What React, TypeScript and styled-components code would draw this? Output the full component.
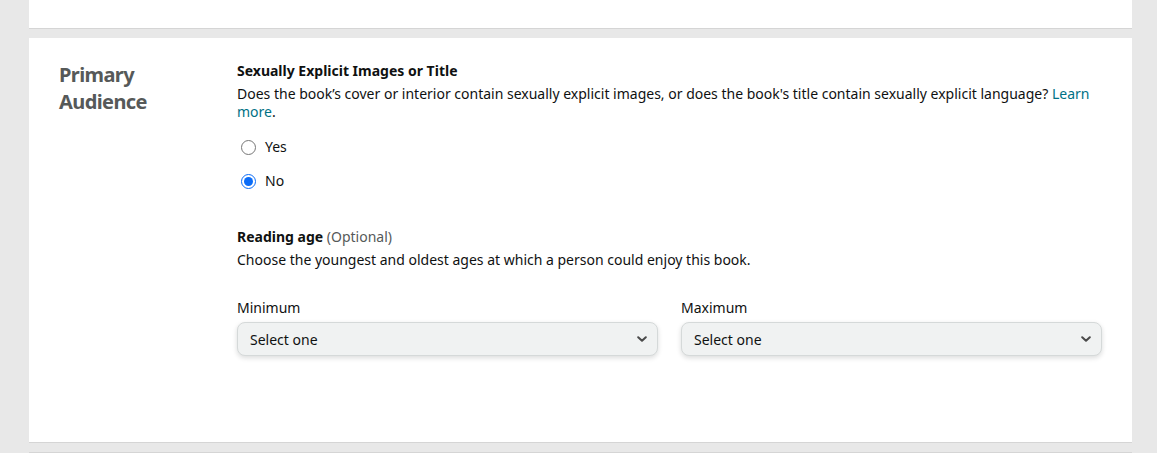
import React from "react";
import styled, { createGlobalStyle } from "styled-components";

const Global = createGlobalStyle`
  html, body { margin: 0; padding: 0; }
  body {
    background: #e8e8e8;
    font-family: "Noto Sans", "Liberation Sans", Arial, sans-serif;
    color: #0f1111;
  }
`;

const Page = styled.div`
  display: flex;
  flex-direction: column;
  gap: 9px;
  padding: 0 25px 0 29px;
  width: 1103px;
`;

const Card = styled.section<{ $stub?: boolean }>`
  background: #fff;
  border-bottom: 1px solid #d5d5d5;
  height: ${(p) => (p.$stub ? "28px" : "auto")};
  box-sizing: content-box;
`;

const Row = styled.div`
  display: grid;
  grid-template-columns: 178px 1fr;
  padding: 23px 30px 86px 30px;
`;

const SectionTitle = styled.h2`
  margin: 0;
  font-size: 20px;
  line-height: 27px;
  font-weight: 700;
  letter-spacing: -0.6px;
  color: #565959;
`;

const Content = styled.div`
  display: flex;
  flex-direction: column;
`;

const Label = styled.div`
  font-size: 14px;
  line-height: 20px;
  font-weight: 700;
`;

const Optional = styled.span`
  font-weight: 400;
  color: #565959;
`;

const Desc = styled.p`
  margin: 4px 0 0;
  font-size: 14px;
  line-height: 18px;
`;

const Link = styled.a`
  color: #007185;
  text-decoration: none;
`;

const RadioGroup = styled.div`
  display: flex;
  flex-direction: column;
  gap: 14px;
  margin: 16px 0 0;
`;

const RadioLabel = styled.label`
  display: flex;
  align-items: center;
  gap: 9px;
  font-size: 14px;
  line-height: 20px;
  padding-left: 4px;
`;

const Radio = styled.input`
  margin: 0;
  width: 15px;
  height: 15px;
  accent-color: #0b6cf7;
`;

const Block = styled.div<{ $mt: number }>`
  margin-top: ${(p) => p.$mt}px;
`;

const Selects = styled.div`
  display: grid;
  grid-template-columns: 1fr 1fr;
  gap: 23px;
  margin-top: 29px;
`;

const Field = styled.div`
  display: flex;
  flex-direction: column;
  gap: 4px;
`;

const FieldLabel = styled.div`
  font-size: 14px;
  line-height: 20px;
`;

const SelectBox = styled.div`
  display: flex;
  align-items: center;
  justify-content: space-between;
  height: 32px;
  padding: 0 10px 0 12px;
  background: #f0f2f2;
  border: 1px solid #d5d9d9;
  border-radius: 8px;
  box-shadow: 0 2px 5px rgba(15, 17, 17, 0.15);
  font-size: 14px;
  color: #0f1111;
`;

const Chevron = () => (
  <svg width="10" height="6" viewBox="0 0 10 6">
    <path d="M1.2 1.2 L5 4.8 L8.8 1.2" fill="none" stroke="#4a4a4a" strokeWidth="2" strokeLinecap="round" strokeLinejoin="round" />
  </svg>
);

export default function App() {
  return (
    <>
      <Global />
      <Page>
        <Card $stub />
        <Card>
          <Row>
            <SectionTitle>
              Primary
              <br />
              Audience
            </SectionTitle>
            <Content>
              <Label>Sexually Explicit Images or Title</Label>
              <Desc>
                Does the book’s cover or interior contain sexually explicit images, or does the book's title contain
                sexually explicit language? <Link href="#">Learn more</Link>.
              </Desc>
              <RadioGroup>
                <RadioLabel>
                  <Radio type="radio" name="explicit" />
                  Yes
                </RadioLabel>
                <RadioLabel>
                  <Radio type="radio" name="explicit" defaultChecked />
                  No
                </RadioLabel>
              </RadioGroup>
              <Block $mt={36}>
                <Label>
                  Reading age <Optional>(Optional)</Optional>
                </Label>
                <Desc>Choose the youngest and oldest ages at which a person could enjoy this book.</Desc>
              </Block>
              <Selects>
                <Field>
                  <FieldLabel>Minimum</FieldLabel>
                  <SelectBox>
                    Select one
                    <Chevron />
                  </SelectBox>
                </Field>
                <Field>
                  <FieldLabel>Maximum</FieldLabel>
                  <SelectBox>
                    Select one
                    <Chevron />
                  </SelectBox>
                </Field>
              </Selects>
            </Content>
          </Row>
        </Card>
        <Card />
      </Page>
    </>
  );
}
